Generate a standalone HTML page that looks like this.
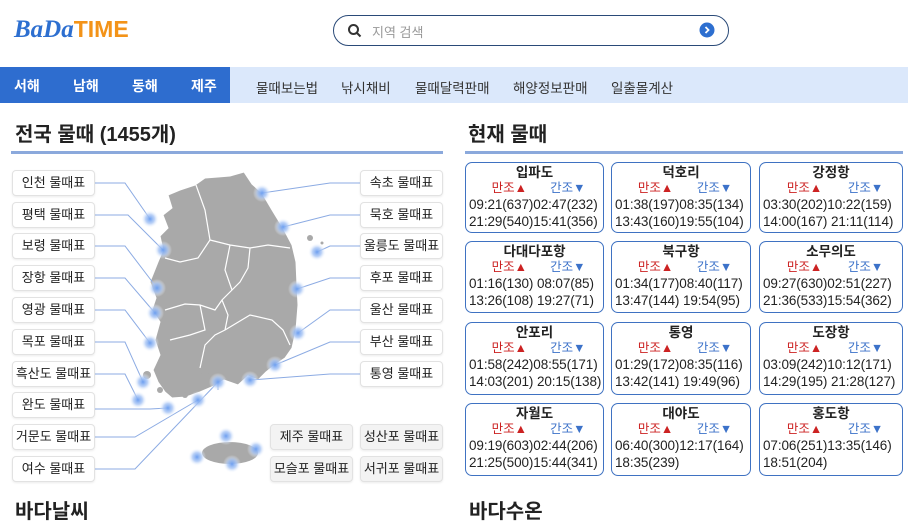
<!DOCTYPE html>
<html><head><meta charset="utf-8"><style>
*{margin:0;padding:0;box-sizing:border-box}
body{width:913px;height:523px;overflow:hidden;background:#fff;font-family:"Liberation Sans","Noto Sans CJK KR",sans-serif;color:#222;position:relative}
.a{position:absolute}
.logo{left:14px;top:16px;font-size:25px;font-weight:bold;font-style:italic;color:#2d6fd0;font-family:"Liberation Serif","Noto Sans CJK KR",serif}
.logo span{color:#f39318;font-style:normal;font-family:"Liberation Sans",sans-serif;font-size:23px}
.search{left:333px;top:15px;width:396px;height:31px;border:1.5px solid #2a4a78;border-radius:16px}
.nav1{left:0;top:67px;width:230px;height:36px;background:#2e6dcf}
.nav2{left:230px;top:67px;width:678px;height:36px;background:#dbe8fb}
.nav1 span{position:absolute;top:9px;color:#fff;font-weight:bold;font-size:14px}
.nav2 span{position:absolute;top:10px;color:#333;font-size:13.5px}
h2{position:absolute;font-size:20px;font-weight:bold;color:#222}
.ul{height:3px;background:#8ba9dc}
.lb{position:absolute;width:83px;height:26px;border:1px solid #e2e2e2;border-radius:4px;background:#fff;font-size:13px;text-align:center;line-height:24px;box-shadow:0 1px 2px rgba(0,0,0,.08)}
.lb.g{background:#f3f3f3}
.c{position:absolute;border:1.3px solid #3f72c2;border-radius:7px;font-size:13.5px;line-height:17px;padding-top:1px}
.c b{display:block;text-align:center;font-size:13.5px}
.c .m{display:flex;justify-content:space-around;font-size:12.5px;line-height:15px;padding:0 6px 0 14px}
.c .m i{font-style:normal;color:#c22}
.c .m u{text-decoration:none;color:#3c72c9}
.c .t{padding-left:3px;white-space:nowrap;letter-spacing:-.1px}
</style></head><body>
<div class="a logo">BaDa<span>TIME</span></div>
<div class="a search">
<svg class="a" style="left:13px;top:7px" width="15" height="15" viewBox="0 0 15 15"><circle cx="6.5" cy="6.5" r="4.5" fill="none" stroke="#333" stroke-width="2"/><path d="M10 10l3.5 3.5" stroke="#333" stroke-width="2"/></svg>
<div class="a" style="left:38px;top:6px;font-size:13px;color:#999">지역 검색</div>
<svg class="a" style="left:365px;top:6px" width="16" height="16" viewBox="0 0 16 16"><circle cx="8" cy="8" r="7.5" fill="#2d6fd0"/><path d="M6.5 5l3 3-3 3" fill="none" stroke="#fff" stroke-width="1.8"/></svg>
</div>
<div class="a nav1"><span style="left:14px">서해</span><span style="left:73px">남해</span><span style="left:132px">동해</span><span style="left:191px">제주</span></div>
<div class="a nav2"><span style="left:26px">물때보는법</span><span style="left:111px">낚시채비</span><span style="left:185px">물때달력판매</span><span style="left:283px">해양정보판매</span><span style="left:381px">일출몰계산</span></div>
<h2 style="left:15px;top:118px">전국 물때 (1455개)</h2>
<div class="a ul" style="left:11px;top:151px;width:432px"></div>
<h2 style="left:468px;top:118px">현재 물때</h2>
<div class="a ul" style="left:465px;top:151px;width:438px"></div>

<svg class="a" style="left:0;top:160px" width="460" height="330" viewBox="0 160 460 330">
<defs><radialGradient id="gl"><stop offset="0" stop-color="#6d9ff0"/><stop offset=".5" stop-color="#a9c6f5" stop-opacity=".8"/><stop offset="1" stop-color="#fff" stop-opacity="0"/></radialGradient></defs>
<path fill="#a9a9a9" stroke="#fff" stroke-width="1" d="M244 172 L252 184 L262 193 L272 210 L283 228 L292 245 L296 262 L297 285 L298 305 L296 330 L292 348 L285 358 L276 364 L266 372 L258 380 L248 376 L238 385 L224 380 L214 386 L200 392 L186 397 L172 398 L165 392 L158 382 L153 370 L160 355 L155 340 L160 322 L152 310 L156 298 L150 282 L158 262 L163 250 L160 236 L168 228 L163 215 L172 208 L168 195 L180 190 L195 185 L205 178 L218 177 L230 176 Z"/>
<path fill="none" stroke="#fff" stroke-width="1.2" d="M196 185 L205 210 L210 240 L198 258 L180 262 L165 258 M210 240 L230 245 L250 248 L268 245 L290 248 M230 245 L225 270 L232 290 L222 300 L215 310 L200 305 L185 304 L165 310 M250 248 L248 268 L240 282 L232 290 M222 300 L228 315 L225 330 L215 335 L205 345 L200 368 M225 330 L250 315 L272 320 L283 330 L290 345 M200 305 L205 330 L190 335 L170 340"/>
<ellipse cx="230" cy="453" rx="28" ry="11" fill="#a9a9a9"/>
<g fill="#a9a9a9"><circle cx="310" cy="238" r="3"/><circle cx="322" cy="243" r="1.5"/><circle cx="147" cy="375" r="4"/><circle cx="160" cy="390" r="3"/><circle cx="185" cy="395" r="3"/><circle cx="205" cy="375" r="4"/></g>
<g stroke="#8cabe3" stroke-width="1" fill="none">
<path d="M95 183H125L150 219"/><path d="M95 215H128L163 250"/><path d="M95 246H125L157 288"/><path d="M95 278H125L155 313"/><path d="M95 310H125L150 343"/><path d="M95 342H125L143 382"/><path d="M95 374H125L138 400"/><path d="M95 409H150L168 408"/><path d="M95 437H135L198 400"/><path d="M95 469H135L218 382V390"/>
<path d="M360 183H330L262 193"/><path d="M360 215H330L283 227"/><path d="M360 246H330L317 252"/><path d="M360 278H330L297 289"/><path d="M360 310H330L298 333"/><path d="M360 342H330L275 365"/><path d="M360 374H330L250 380"/>
</g>
<g fill="url(#gl)">
<circle cx="150" cy="219" r="9"/><circle cx="163" cy="250" r="9"/><circle cx="157" cy="288" r="9"/><circle cx="155" cy="313" r="9"/><circle cx="150" cy="343" r="9"/><circle cx="143" cy="382" r="9"/><circle cx="138" cy="400" r="9"/><circle cx="168" cy="408" r="9"/><circle cx="198" cy="400" r="9"/><circle cx="218" cy="382" r="9"/><circle cx="262" cy="193" r="9"/><circle cx="283" cy="227" r="9"/><circle cx="317" cy="252" r="9"/><circle cx="297" cy="289" r="9"/><circle cx="298" cy="333" r="9"/><circle cx="275" cy="365" r="9"/><circle cx="250" cy="380" r="9"/><circle cx="226" cy="436" r="9"/><circle cx="256" cy="449" r="9"/><circle cx="197" cy="457" r="9"/><circle cx="232" cy="464" r="9"/>
</g></svg>

<div class="lb" style="left:12px;top:170px">인천 물때표</div>
<div class="lb" style="left:12px;top:202px">평택 물때표</div>
<div class="lb" style="left:12px;top:233px">보령 물때표</div>
<div class="lb" style="left:12px;top:265px">장항 물때표</div>
<div class="lb" style="left:12px;top:297px">영광 물때표</div>
<div class="lb" style="left:12px;top:329px">목포 물때표</div>
<div class="lb" style="left:12px;top:361px">흑산도 물때표</div>
<div class="lb" style="left:12px;top:392px">완도 물때표</div>
<div class="lb" style="left:12px;top:424px">거문도 물때표</div>
<div class="lb" style="left:12px;top:456px">여수 물때표</div>
<div class="lb" style="left:360px;top:170px">속초 물때표</div>
<div class="lb" style="left:360px;top:202px">묵호 물때표</div>
<div class="lb" style="left:360px;top:233px">울릉도 물때표</div>
<div class="lb" style="left:360px;top:265px">후포 물때표</div>
<div class="lb" style="left:360px;top:297px">울산 물때표</div>
<div class="lb" style="left:360px;top:329px">부산 물때표</div>
<div class="lb" style="left:360px;top:361px">통영 물때표</div>
<div class="lb g" style="left:270px;top:424px">제주 물때표</div>
<div class="lb g" style="left:360px;top:424px">성산포 물때표</div>
<div class="lb g" style="left:270px;top:456px">모슬포 물때표</div>
<div class="lb g" style="left:360px;top:456px">서귀포 물때표</div>

<div class="c" style="left:465px;top:162px;width:139px;height:71px"><b>입파도</b><div class="m"><i>만조▲</i><u>간조▼</u></div><div class="t">09:21(637)02:47(232)</div><div class="t">21:29(540)15:41(356)</div></div>
<div class="c" style="left:611px;top:162px;width:140px;height:71px"><b>덕호리</b><div class="m"><i>만조▲</i><u>간조▼</u></div><div class="t">01:38(197)08:35(134)</div><div class="t">13:43(160)19:55(104)</div></div>
<div class="c" style="left:759px;top:162px;width:144px;height:71px"><b>강정항</b><div class="m"><i>만조▲</i><u>간조▼</u></div><div class="t">03:30(202)10:22(159)</div><div class="t">14:00(167) 21:11(114)</div></div>
<div class="c" style="left:465px;top:241px;width:139px;height:72px"><b>다대다포항</b><div class="m"><i>만조▲</i><u>간조▼</u></div><div class="t">01:16(130) 08:07(85)</div><div class="t">13:26(108) 19:27(71)</div></div>
<div class="c" style="left:611px;top:241px;width:140px;height:72px"><b>북구항</b><div class="m"><i>만조▲</i><u>간조▼</u></div><div class="t">01:34(177)08:40(117)</div><div class="t">13:47(144) 19:54(95)</div></div>
<div class="c" style="left:759px;top:241px;width:144px;height:72px"><b>소무의도</b><div class="m"><i>만조▲</i><u>간조▼</u></div><div class="t">09:27(630)02:51(227)</div><div class="t">21:36(533)15:54(362)</div></div>
<div class="c" style="left:465px;top:322px;width:139px;height:73px"><b>안포리</b><div class="m"><i>만조▲</i><u>간조▼</u></div><div class="t">01:58(242)08:55(171)</div><div class="t">14:03(201) 20:15(138)</div></div>
<div class="c" style="left:611px;top:322px;width:140px;height:73px"><b>통영</b><div class="m"><i>만조▲</i><u>간조▼</u></div><div class="t">01:29(172)08:35(116)</div><div class="t">13:42(141) 19:49(96)</div></div>
<div class="c" style="left:759px;top:322px;width:144px;height:73px"><b>도장항</b><div class="m"><i>만조▲</i><u>간조▼</u></div><div class="t">03:09(242)10:12(171)</div><div class="t">14:29(195) 21:28(127)</div></div>
<div class="c" style="left:465px;top:403px;width:139px;height:73px"><b>자월도</b><div class="m"><i>만조▲</i><u>간조▼</u></div><div class="t">09:19(603)02:44(206)</div><div class="t">21:25(500)15:44(341)</div></div>
<div class="c" style="left:611px;top:403px;width:140px;height:73px"><b>대야도</b><div class="m"><i>만조▲</i><u>간조▼</u></div><div class="t">06:40(300)12:17(164)</div><div class="t">18:35(239)</div></div>
<div class="c" style="left:759px;top:403px;width:144px;height:73px"><b>홍도항</b><div class="m"><i>만조▲</i><u>간조▼</u></div><div class="t">07:06(251)13:35(146)</div><div class="t">18:51(204)</div></div>

<h2 style="left:15px;top:495px">바다날씨</h2>
<h2 style="left:469px;top:495px">바다수온</h2>
</body></html>
